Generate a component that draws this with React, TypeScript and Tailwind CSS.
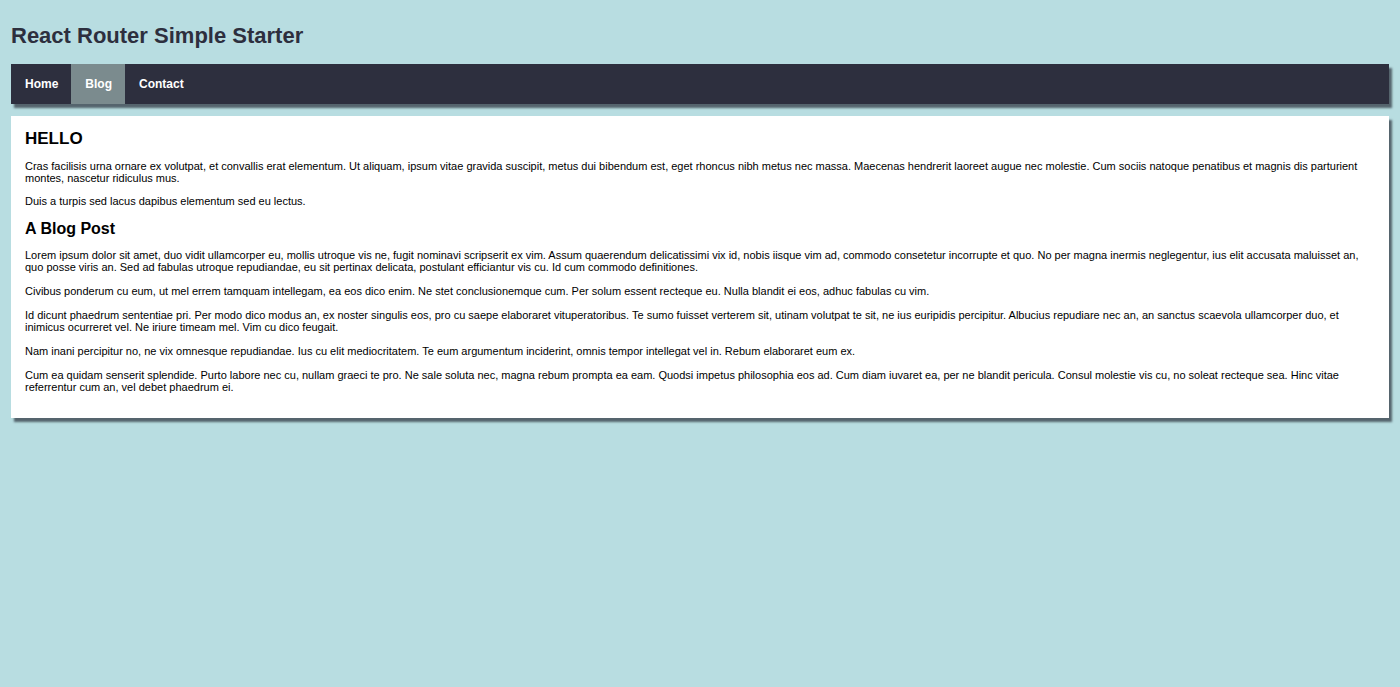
const paragraphs = [
    "Lorem ipsum dolor sit amet, duo vidit ullamcorper eu, mollis utroque vis ne, fugit nominavi scripserit ex vim. Assum quaerendum delicatissimi vix id, nobis iisque vim ad, commodo consetetur incorrupte et quo. No per magna inermis neglegentur, ius elit accusata maluisset an, quo posse viris an. Sed ad fabulas utroque repudiandae, eu sit pertinax delicata, postulant efficiantur vis cu. Id cum commodo definitiones.",
    "Civibus ponderum cu eum, ut mel errem tamquam intellegam, ea eos dico enim. Ne stet conclusionemque cum. Per solum essent recteque eu. Nulla blandit ei eos, adhuc fabulas cu vim.",
    "Id dicunt phaedrum sententiae pri. Per modo dico modus an, ex noster singulis eos, pro cu saepe elaboraret vituperatoribus. Te sumo fuisset verterem sit, utinam volutpat te sit, ne ius euripidis percipitur. Albucius repudiare nec an, an sanctus scaevola ullamcorper duo, et inimicus ocurreret vel. Ne iriure timeam mel. Vim cu dico feugait.",
    "Nam inani percipitur no, ne vix omnesque repudiandae. Ius cu elit mediocritatem. Te eum argumentum inciderint, omnis tempor intellegat vel in. Rebum elaboraret eum ex.",
    "Cum ea quidam senserit splendide. Purto labore nec cu, nullam graeci te pro. Ne sale soluta nec, magna rebum prompta ea eam. Quodsi impetus philosophia eos ad. Cum diam iuvaret ea, per ne blandit pericula. Consul molestie vis cu, no soleat recteque sea. Hinc vitae referrentur cum an, vel debet phaedrum ei.",
];

const links = [
    { label: "Home", active: false },
    { label: "Blog", active: true },
    { label: "Contact", active: false },
];

const App = () => {
    return (
        <div className="min-h-screen bg-[#b8dde1] px-[11px] pt-[22px] pb-8 font-['Liberation_Sans',Arial,sans-serif] text-black">
            <h1 className="text-[22px] font-bold leading-[28px] text-[#2d2f3e]">
                React Router Simple Starter
            </h1>

            <nav className="mt-[14px] flex h-10 bg-[#2d2f3e] shadow-[3px_4px_2px_rgba(60,70,80,0.8)]">
                {links.map((l) => (
                    <a
                        key={l.label}
                        className={`flex items-center pl-[14px] pr-[13px] text-[12px] font-bold text-white
                            ${l.active ? "bg-[#7b8b8e]" : ""}`}
                    >
                        {l.label}
                    </a>
                ))}
            </nav>

            <main className="mt-3 bg-white px-[14px] pt-[12px] pb-[25px] shadow-[3px_4px_2px_rgba(60,70,80,0.8)]">
                <h2 className="text-[17px] font-bold leading-[22px]">HELLO</h2>
                <p className="mt-[10px] text-[11px] leading-[12px]">
                    Cras facilisis urna ornare ex volutpat, et convallis erat elementum. Ut aliquam, ipsum vitae gravida suscipit, metus dui bibendum est, eget rhoncus nibh metus nec massa. Maecenas hendrerit laoreet augue nec molestie. Cum sociis natoque penatibus et magnis dis parturient montes, nascetur ridiculus mus.
                </p>
                <p className="mt-[11px] text-[11px] leading-[12px]">
                    Duis a turpis sed lacus dapibus elementum sed eu lectus.
                </p>

                <h3 className="mt-[12px] text-[16px] font-bold leading-[20px]">A Blog Post</h3>
                {paragraphs.map((p, i) => (
                    <p key={i} className={`${i === 0 ? "mt-[10px]" : "mt-[12px]"} text-[11px] leading-[12px]`}>
                        {p}
                    </p>
                ))}
            </main>
        </div>
    );
};

export default App;
